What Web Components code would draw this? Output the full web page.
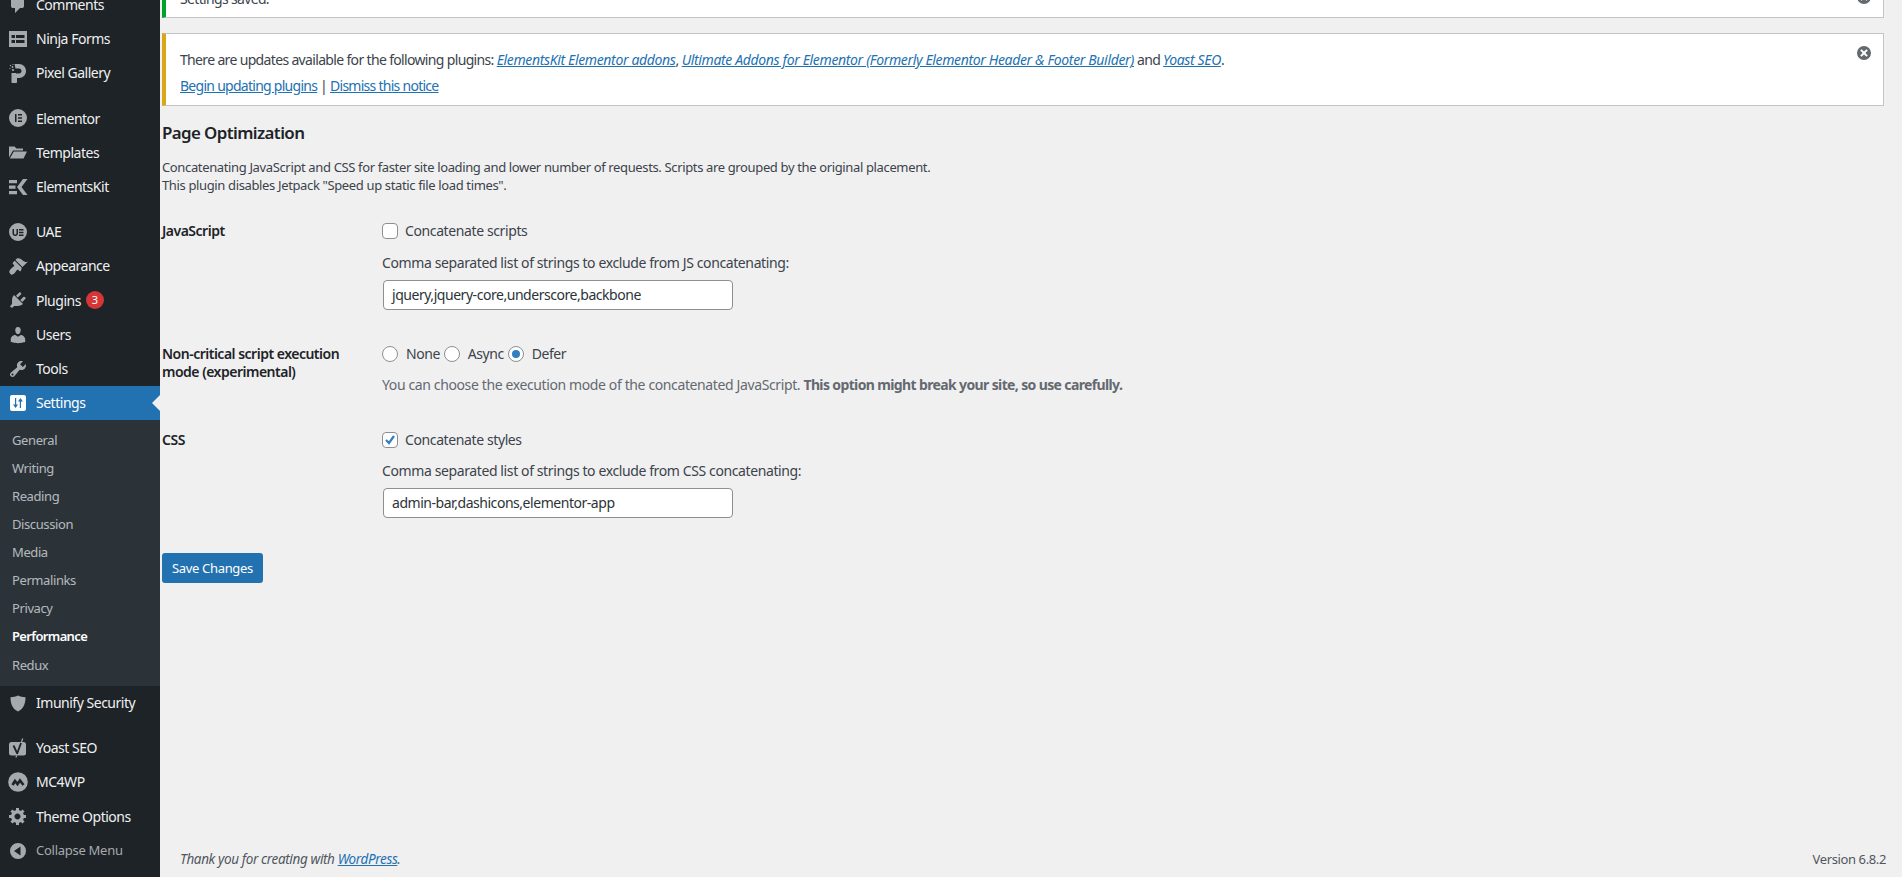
<!DOCTYPE html>
<html lang="en">
<head>
<meta charset="utf-8">
<title>Page Optimization</title>
<style>
html, body { margin: 0; height: 877px; overflow: hidden; background: #f0f0f1; }
body {
    display: flex;
    font: 13px/1.4 "Noto Sans", "Open Sans", sans-serif;
    letter-spacing: -0.33px;
    color: #3c434a;
}
a { color: #2271b1; }
wp-notice p { margin: 0; line-height: 18px; }
wp-notice p + p { margin-top: 8px; letter-spacing: -0.73px; }
wp-notice i { letter-spacing: -0.35px; }
h2 { flex: none; margin: 16.4px 0 0; font-size: 16.9px; line-height: 22px; letter-spacing: -0.6px; font-weight: 600; color: #1d2327; }
.intro { flex: none; margin: 14px 0 27.7px; letter-spacing: -0.36px; }
.line { display: flex; align-items: center; height: 18px; }
.hint { margin-top: 14px; margin-bottom: 8px; line-height: 18px; }
.desc { margin-top: 13px; line-height: 18px; color: #646970; letter-spacing: -0.38px; }
.desc b { letter-spacing: -0.63px; }
</style>
</head>
<body>
<wp-sidebar>
    <menu-item icon="comments" style="margin-top:-12.2px">Comments</menu-item>
    <menu-item icon="ninja">Ninja Forms</menu-item>
    <menu-item icon="pixel">Pixel Gallery</menu-item>
    <menu-gap></menu-gap>
    <menu-item icon="elementor">Elementor</menu-item>
    <menu-item icon="templates">Templates</menu-item>
    <menu-item icon="ekit">ElementsKit</menu-item>
    <menu-gap></menu-gap>
    <menu-item icon="uae">UAE</menu-item>
    <menu-item icon="appearance">Appearance</menu-item>
    <menu-item icon="plugins" badge="3">Plugins</menu-item>
    <menu-item icon="users">Users</menu-item>
    <menu-item icon="tools">Tools</menu-item>
    <menu-item icon="settings" current>Settings</menu-item>
    <sub-menu>
        <sub-item>General</sub-item>
        <sub-item>Writing</sub-item>
        <sub-item>Reading</sub-item>
        <sub-item>Discussion</sub-item>
        <sub-item>Media</sub-item>
        <sub-item>Permalinks</sub-item>
        <sub-item>Privacy</sub-item>
        <sub-item current>Performance</sub-item>
        <sub-item>Redux</sub-item>
    </sub-menu>
    <menu-item icon="imunify">Imunify Security</menu-item>
    <menu-gap></menu-gap>
    <menu-item icon="yoast">Yoast SEO</menu-item>
    <menu-item icon="mc4wp">MC4WP</menu-item>
    <menu-item icon="gear">Theme Options</menu-item>
    <menu-item icon="collapse" dim>Collapse Menu</menu-item>
</wp-sidebar>

<wp-main>
    <wp-notice type="success" style="margin-top:-23px;height:41px">
        <p style="padding-top:12px">Settings saved.</p>
    </wp-notice>
    <wp-notice type="warning" style="margin-top:15px;height:72.6px;padding-top:17px">
        <p>There are updates available for the following plugins: <a href="#"><i>ElementsKit Elementor addons</i></a>, <a href="#"><i>Ultimate Addons for Elementor (Formerly Elementor Header &amp; Footer Builder)</i></a> and <a href="#"><i>Yoast SEO</i></a>.</p>
        <p><a href="#">Begin updating plugins</a> | <a href="#">Dismiss this notice</a></p>
    </wp-notice>

    <h2>Page Optimization</h2>
    <p class="intro">Concatenating JavaScript and CSS for faster site loading and lower number of requests. Scripts are grouped by the original placement.<br>This plugin disables Jetpack "Speed up static file load times".</p>

    <form-row label="JavaScript">
        <div class="line"><wp-check>Concatenate scripts</wp-check></div>
        <div class="hint">Comma separated list of strings to exclude from JS concatenating:</div>
        <wp-input value="jquery,jquery-core,underscore,backbone"></wp-input>
    </form-row>
    <form-row label="Non-critical script execution mode (experimental)" style="margin-top:35px">
        <div class="line">
            <wp-radio>None</wp-radio>
            <wp-radio>Async</wp-radio>
            <wp-radio checked>Defer</wp-radio>
        </div>
        <div class="desc">You can choose the execution mode of the concatenated JavaScript. <b>This option might break your site, so use carefully.</b></div>
    </form-row>
    <form-row label="CSS" style="margin-top:37px">
        <div class="line"><wp-check checked>Concatenate styles</wp-check></div>
        <div class="hint" style="margin-top:13px">Comma separated list of strings to exclude from CSS concatenating:</div>
        <wp-input value="admin-bar,dashicons,elementor-app"></wp-input>
    </form-row>

    <wp-button>Save Changes</wp-button>

    <wp-footer>
        <i slot="left">Thank you for creating with <a href="#">WordPress</a>.</i>
        <span slot="right">Version 6.8.2</span>
    </wp-footer>
</wp-main>

<script>
const icons = {
    comments: '<path d="M5 2h9q.82 0 1.41.59T16 4v7q0 .82-.59 1.41T14 13h-2l-5 5v-5H5q-.82 0-1.41-.59T3 11V4q0-.82.59-1.41T5 2z"/>',
    ninja: '<path fill-rule="evenodd" d="M1 2h18v16H1zM3.5 6v3H7V6zM8 6v3h8.5V6zM3.5 11v3H7v-3zM8 11v3h8.5v-3z"/>',
    pixel: '<path d="M6.5 1H11c4 0 7 3 7 7s-3 7-7 7H9v4c0 .6-.4 1-1 1H4.5c-.6 0-1-.4-1-1v-9H8v.5h3c1.5 0 2.5-1 2.5-2.5S12.5 5.5 11 5.5H7.5z"/><circle cx="2.5" cy="2.5" r=".7"/><circle cx="5" cy="1.5" r=".6"/><circle cx="4.5" cy="4" r=".9"/><circle cx="2" cy="5.5" r=".6"/><circle cx="5" cy="7" r="1.1"/>',
    elementor: '<path fill-rule="evenodd" d="M10 1a9 9 0 1 0 0 18 9 9 0 0 0 0-18zM7 6h1.5v8H7zM10 6h4v1.5h-4zM10 9.2h4v1.5h-4zM10 12.5h4V14h-4z"/>',
    templates: '<path d="M1 3.5h5.5L8.5 5.5h6.5v2H5L1 14.5zM5.8 8.5H19l-3.5 7H1.8z"/>',
    ekit: '<path d="M1 3h8v3.2H1zM1 8.5h6.5v3.2H1zM1 14h8v3.2H1zM15 2h4.5L13.5 10l6 8H15l-6-8z"/>',
    uae: '<path fill-rule="evenodd" d="M10 1a9 9 0 1 0 0 18 9 9 0 0 0 0-18zM4.5 7H6v4.2c0 .8.5 1.3 1.2 1.3s1.3-.5 1.3-1.3V7H10v4.2c0 1.7-1.2 2.8-2.8 2.8s-2.7-1.1-2.7-2.8zM11 7h4.5v1.4H11zM11 9.8h4.5v1.4H11zM11 12.6h4.5V14H11z"/>',
    appearance: '<path d="M14.48 11.06L7.41 3.99l1.5-1.5c.5-.56 2.3-.47 3.51.32 1.21.8 1.43 1.28 2.91 2.1 1.18.64 2.45 1.26 4.45.85zm-.71.71L6.7 4.7 4.93 6.47c-.39.39-.39 1.02 0 1.41l1.06 1.06c.39.39.39 1.03 0 1.42-.6.6-1.43 1.11-2.21 1.69-.35.26-.7.53-1.01.84-1.31 1.31-1.75 2.88-1.34 3.68.33.62.99 1.3 1.49 1.92.66.44 2.24.01 3.55-1.29.3-.31.58-.66.84-1.02.58-.78 1.09-1.61 1.69-2.21.39-.39 1.03-.39 1.42 0l1.06 1.06c.39.39 1.02.39 1.41 0z"/>',
    plugins: '<path d="M13.11 4.36L9.87 7.6 8 5.73l3.24-3.24c.35-.34 1.05-.2 1.56.32.52.51.66 1.21.31 1.55zm-8 1.77l.91-1.12 9.01 9.01-1.19.84c-.71.71-2.63 1.16-3.82 1.16H6.14L4.9 17.26c-.59.59-1.54.59-2.12 0-.59-.58-.59-1.53 0-2.12l1.24-1.24v-3.88c0-1.13.4-3.19 1.09-3.89zm7.26 3.97l3.24-3.24c.34-.35 1.04-.21 1.55.31.52.51.66 1.21.31 1.55l-3.24 3.25z"/>',
    users: '<path d="M10 9.25c-2.27 0-2.73-3.44-2.73-3.44C7 4.02 7.82 2 9.97 2c2.16 0 2.98 2.02 2.71 3.81 0 0-.41 3.44-2.68 3.44zm0 2.57L12.72 10c2.39 0 4.52 2.33 4.52 4.53v2.49s-3.65 1.13-7.24 1.13c-3.65 0-7.24-1.13-7.24-1.13v-2.49c0-2.25 1.94-4.48 4.47-4.48z"/>',
    tools: '<path d="M16.68 9.77c-1.34 1.34-3.3 1.67-4.95.99l-5.41 6.52c-.99.99-2.59.99-3.58 0s-.99-2.59 0-3.57l6.52-5.42c-.68-1.65-.35-3.61.99-4.95 1.28-1.28 3.12-1.62 4.72-1.06l-2.89 2.89 2.82 2.82 2.86-2.87c.53 1.58.18 3.39-1.08 4.65zM3.81 16.21c.4.39 1.04.39 1.43 0 .4-.4.4-1.04 0-1.43-.39-.4-1.03-.4-1.43 0-.39.39-.39 1.03 0 1.43z"/>',
    settings: '<path fill-rule="evenodd" d="M18 16V4c0-1.1-.9-2-2-2H4c-1.1 0-2 .9-2 2v12c0 1.1.9 2 2 2h12c1.1 0 2-.9 2-2zM7 5h1.2v6.5H10L7.6 15 5 11.5h2zM12.4 5L15 8.5h-2V15h-1.2V8.5H10z"/>',
    imunify: '<path d="M10 2.5c2.2 1.2 4.7 1.7 7.5 1.7 0 6-1.5 11.3-7.5 14.3-6-3-7.5-8.3-7.5-14.3 2.8 0 5.3-.5 7.5-1.7z"/>',
    yoast: '<rect x="1" y="4" width="17" height="13.5" rx="2.5"/><path d="M5.5 7.5l3.5 7.5M13 5L9 16" fill="none" stroke="#1d2327" stroke-width="1.8"/><path d="M13.5 4l1.2-3.5M8.8 17.5L7.8 19.5" fill="none" stroke="#a7aaad" stroke-width="1.2"/>',
    mc4wp: '<circle cx="10" cy="10" r="9.8"/><path d="M4.5 13l2.5-4 2.5 3 2.5-3.5 3.5 4.5" fill="none" stroke="#1d2327" stroke-width="2.6"/>',
    gear: '<path d="M18 12h-2.18c-.17.7-.44 1.35-.81 1.93l1.54 1.54-2.1 2.1-1.54-1.54c-.58.36-1.23.63-1.91.79V19H8v-2.18c-.68-.16-1.33-.43-1.91-.79l-1.54 1.54-2.12-2.12 1.54-1.54c-.36-.58-.63-1.23-.79-1.91H1V9.03h2.17c.16-.7.44-1.35.8-1.94L2.43 5.55l2.1-2.1 1.54 1.54c.58-.37 1.24-.64 1.93-.81V2h3v2.18c.68.16 1.33.43 1.91.79l1.54-1.54 2.12 2.12-1.54 1.54c.36.59.64 1.24.8 1.94H18V12zm-8.5 1.5c1.66 0 3-1.34 3-3s-1.34-3-3-3-3 1.34-3 3 1.34 3 3 3z"/>',
    collapse: '<path fill-rule="evenodd" d="M10 2a8 8 0 1 1 0 16 8 8 0 0 1 0-16zM12.5 5.5L6 10l6.5 4.5z"/>'
};

const sidebarTpl = document.createElement('template');
sidebarTpl.innerHTML = `
<style>
:host { display: block; flex: 0 0 160px; width: 160px; height: 877px; overflow: hidden; background: #1d2327; }
</style>
<slot></slot>`;

class WpSidebar extends HTMLElement {
    constructor() {
        super();
        this.attachShadow({ mode: 'open' }).appendChild(sidebarTpl.content.cloneNode(true));
    }
}
customElements.define('wp-sidebar', WpSidebar);

class MenuItem extends HTMLElement {
    constructor() {
        super();
        const icon = icons[this.getAttribute('icon')] || '';
        const badge = this.getAttribute('badge');
        this.attachShadow({ mode: 'open' }).innerHTML = `
<style>
:host { display: flex; align-items: center; position: relative; height: 34.2px; font-size: 14px; letter-spacing: -0.48px; color: #f0f0f1; fill: #a7aaad; }
:host([current]) { background: #2271b1; color: #fff; fill: #fff; }
:host([current])::after { content: ""; position: absolute; right: 0; top: 50%; margin-top: -8px; border: 8px solid transparent; border-right-color: #f0f0f1; }
:host([dim]) { font-size: 13px; letter-spacing: -0.27px; color: #a7aaad; }
svg { flex: 0 0 20px; width: 20px; height: 20px; margin: 0 8px; }
.badge { width: 18px; height: 18px; margin-left: 5px; border-radius: 50%; background: #d63638; color: #fff; font-size: 11px; line-height: 18px; text-align: center; letter-spacing: 0; }
</style>
<svg viewBox="0 0 20 20" aria-hidden="true">${icon}</svg><slot></slot>${badge ? `<span class="badge">${badge}</span>` : ''}`;
    }
}
customElements.define('menu-item', MenuItem);

class MenuGap extends HTMLElement {
    constructor() {
        super();
        this.attachShadow({ mode: 'open' }).innerHTML = '<style>:host { display: block; height: 11px; }</style>';
    }
}
customElements.define('menu-gap', MenuGap);

class SubMenu extends HTMLElement {
    constructor() {
        super();
        this.attachShadow({ mode: 'open' }).innerHTML = `
<style>:host { display: block; padding: 6px 0 7.1px; background: #2c3338; }</style>
<slot></slot>`;
    }
}
customElements.define('sub-menu', SubMenu);

class SubItem extends HTMLElement {
    constructor() {
        super();
        this.attachShadow({ mode: 'open' }).innerHTML = `
<style>
:host { display: block; padding: 4.95px 12px; letter-spacing: -0.4px; color: rgba(240,246,252,.7); }
:host([current]) { color: #fff; font-weight: 600; letter-spacing: -0.65px; }
</style>
<slot></slot>`;
    }
}
customElements.define('sub-item', SubItem);

class WpMain extends HTMLElement {
    constructor() {
        super();
        this.attachShadow({ mode: 'open' }).innerHTML = `
<style>
:host { display: flex; flex-direction: column; flex: 1 1 auto; height: 877px; padding: 0 18px 0 2px; box-sizing: border-box; }
</style>
<slot></slot>`;
    }
}
customElements.define('wp-main', WpMain);

class WpNotice extends HTMLElement {
    constructor() {
        super();
        this.attachShadow({ mode: 'open' }).innerHTML = `
<style>
:host { display: block; position: relative; flex: none; box-sizing: border-box; padding: 0 38px 0 14px; font-size: 14px; letter-spacing: -0.66px; background: #fff; border: 1px solid #c3c4c7; border-left: 4px solid #dba617; }
:host([type=success]) { border-left-color: #00a32a; }
svg { position: absolute; top: 12px; right: 12px; width: 14px; height: 14px; }
</style>
<slot></slot>
<svg viewBox="0 0 14 14" aria-hidden="true"><path fill="#646970" fill-rule="evenodd" d="M7 0a7 7 0 1 1 0 14A7 7 0 0 1 7 0zM4.6 3.2L3.2 4.6 5.6 7 3.2 9.4l1.4 1.4L7 8.4l2.4 2.4 1.4-1.4L8.4 7l2.4-2.4-1.4-1.4L7 5.6z"/></svg>`;
    }
}
customElements.define('wp-notice', WpNotice);

class FormRow extends HTMLElement {
    constructor() {
        super();
        this.attachShadow({ mode: 'open' }).innerHTML = `
<style>
:host { display: grid; grid-template-columns: 200px 1fr; column-gap: 20px; flex: none; font-size: 14px; letter-spacing: -0.39px; }
.label { color: #1d2327; font-weight: 600; line-height: 18px; letter-spacing: -0.5px; }
</style>
<div class="label">${this.getAttribute('label')}</div>
<div class="field"><slot></slot></div>`;
    }
}
customElements.define('form-row', FormRow);

const tickBox = `
:host { display: inline-flex; align-items: center; }
.box { flex: none; box-sizing: border-box; width: 16px; height: 16px; margin-right: 7px; background: #fff; border: 1px solid #8c8f94; display: flex; align-items: center; justify-content: center; }
`;

class WpCheck extends HTMLElement {
    constructor() {
        super();
        const mark = this.hasAttribute('checked')
            ? '<svg width="14" height="14" viewBox="0 0 14 14"><path fill="none" stroke="#2f7fc1" stroke-width="2.2" d="M3 7l3 3 5-7"/></svg>' : '';
        this.attachShadow({ mode: 'open' }).innerHTML = `
<style>${tickBox} .box { border-radius: 4px; }</style>
<span class="box">${mark}</span><slot></slot>`;
    }
}
customElements.define('wp-check', WpCheck);

class WpRadio extends HTMLElement {
    constructor() {
        super();
        const dot = this.hasAttribute('checked') ? '<span class="dot"></span>' : '';
        this.attachShadow({ mode: 'open' }).innerHTML = `
<style>${tickBox}
.box { border-radius: 50%; margin-right: 8px; }
:host { margin-right: 4px; letter-spacing: -0.45px; }
.dot { width: 8px; height: 8px; border-radius: 50%; background: #2f7fc1; }
</style>
<span class="box">${dot}</span><slot></slot>`;
    }
}
customElements.define('wp-radio', WpRadio);

class WpInput extends HTMLElement {
    constructor() {
        super();
        this.attachShadow({ mode: 'open' }).innerHTML = `
<style>
:host { display: block; box-sizing: border-box; width: 350px; height: 30px; margin-left: 1px; padding: 0 8px; background: #fff; border: 1px solid #8c8f94; border-radius: 4px; color: #2c3338; line-height: 28px; font-size: 14px; letter-spacing: -0.46px; }
</style>
<span>${this.getAttribute('value')}</span>`;
    }
}
customElements.define('wp-input', WpInput);

class WpButton extends HTMLElement {
    constructor() {
        super();
        this.attachShadow({ mode: 'open' }).innerHTML = `
<style>
:host { display: block; flex: none; align-self: flex-start; box-sizing: border-box; height: 30px; margin-top: 35px; padding: 0 10px; background: #2271b1; border-radius: 3px; color: #fff; line-height: 30px; }
</style>
<slot></slot>`;
    }
}
customElements.define('wp-button', WpButton);

class WpFooter extends HTMLElement {
    constructor() {
        super();
        this.attachShadow({ mode: 'open' }).innerHTML = `
<style>
:host { display: flex; justify-content: space-between; margin-top: auto; margin-right: -2px; padding: 0 0 8px 18px; color: #50575e; }
::slotted([slot=left]) { font-size: 13.5px; letter-spacing: -0.37px; }
::slotted([slot=right]) { letter-spacing: -0.38px; }
</style>
<slot name="left"></slot><slot name="right"></slot>`;
    }
}
customElements.define('wp-footer', WpFooter);
</script>
</body>
</html>
